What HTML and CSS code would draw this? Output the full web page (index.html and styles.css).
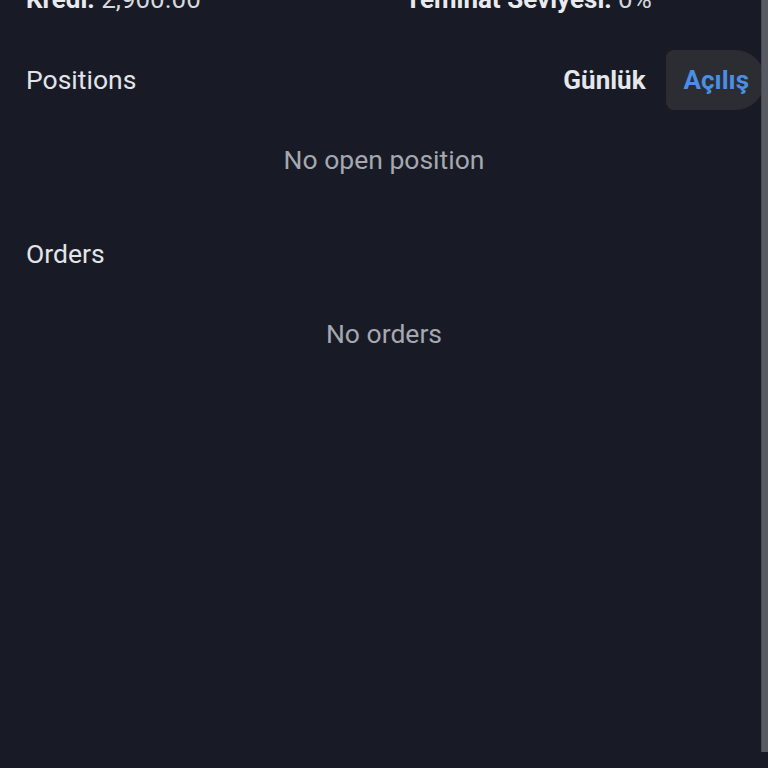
FILE: index.html
```html
<!DOCTYPE html>
<html lang="tr">
<head>
<meta charset="utf-8">
<title>Positions</title>
<link rel="stylesheet" href="styles.css">
</head>
<body>
<div class="app">
  <main class="content">
    <div class="summary">
      <div class="stat"><span class="stat-label">Kredi:</span> <span class="stat-value">2,900.00</span></div>
      <div class="stat"><span class="stat-label">Teminat Seviyesi:</span> <span class="stat-value">0%</span></div>
    </div>

    <section class="section section-positions">
      <div class="section-head">
        <h2 class="section-title">Positions</h2>
        <div class="tabs">
          <span class="tab">Günlük</span>
          <span class="tab tab-active">Açılış</span>
        </div>
      </div>
      <p class="empty">No open position</p>
    </section>

    <section class="section section-orders">
      <div class="section-head">
        <h2 class="section-title">Orders</h2>
      </div>
      <p class="empty">No orders</p>
    </section>
  </main>
  <div class="scrollbar"></div>
</div>
</body>
</html>
```

FILE: styles.css
```css
* { box-sizing: border-box; }

html, body {
  margin: 0;
  padding: 0;
  height: 100%;
  background: #181b25;
  overflow: hidden;
}

body {
  font-family: Roboto, "Liberation Sans", sans-serif;
  color: #e3e5ea;
}

.app {
  position: relative;
  height: 768px;
}

.content {
  width: 100%;
}

.scrollbar {
  position: absolute;
  top: 0;
  right: 0;
  width: 7px;
  height: 100%;
  background: #585a62;
  border-left: 1px solid #4a4c54;
}

.summary {
  display: grid;
  grid-template-columns: 379px 1fr;
  padding-left: 26px;
  margin-top: -16px;
  font-size: 26px;
  line-height: 30px;
}

.stat-label {
  font-weight: 700;
  color: #e9eaee;
}

.stat-value {
  font-weight: 400;
  color: #d6d8de;
}

.section-head {
  display: flex;
  align-items: center;
  justify-content: space-between;
  height: 60px;
  padding-left: 26px;
}

.section {
  padding-top: 36px;
}

.section-orders {
  padding-top: 48px;
}

.section-title {
  margin: 0;
  font-size: 26.5px;
  font-weight: 400;
  color: #e2e4ea;
}

.section-positions .section-title {
  margin-top: -1px;
}

.tabs {
  display: flex;
  align-items: center;
  height: 100%;
  gap: 2px;
  margin-right: 3px;
}

.tab {
  display: flex;
  align-items: center;
  height: 100%;
  padding: 0 18px;
  font-size: 26px;
  font-weight: 700;
  color: #e6e7eb;
}

.tab-active {
  color: #4a8fe4;
  background: #2c2d33;
  border-radius: 8px 30px 30px 8px;
  padding-right: 16px;
}

.empty {
  margin: 0;
  padding-top: 35px;
  text-align: center;
  font-size: 26.5px;
  line-height: 30px;
  color: #a5a8b0;
}

.section-orders .empty {
  padding-top: 36px;
}
```
